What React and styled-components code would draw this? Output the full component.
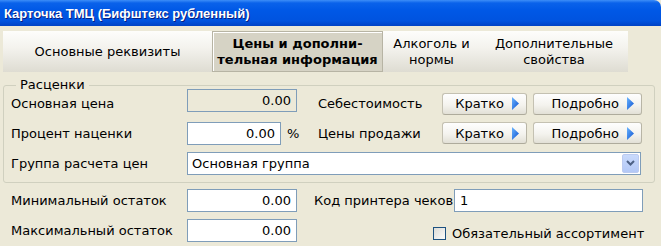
import React from "react";
import styled, { createGlobalStyle } from "styled-components";

const GlobalStyle = createGlobalStyle`
  body {
    margin: 0;
    background: #ffffff;
    font-family: "DejaVu Sans", "Liberation Sans", sans-serif;
  }
`;

const Window = styled.div`
  width: 661px;
  height: 246px;
  background: #ece9d8;
  font-size: 13px;
  color: #000;
  overflow: hidden;
`;

const TitleBar = styled.div`
  height: 26px;
  display: flex;
  align-items: center;
  padding-left: 4px;
  border-top-right-radius: 7px;
  background: linear-gradient(
    #3d8ef8 0,
    #0a62ea 3px,
    #0058e6 40%,
    #0053df 80%,
    #0042c4 100%
  );
  color: #fff;
  font-family: "Liberation Sans", "DejaVu Sans", sans-serif;
  font-weight: bold;
  font-size: 13px;
  text-shadow: 1px 1px 0 #0a1e80;
`;

const Body = styled.div`
  padding: 5px 6px 0 3px;
`;

const TabStrip = styled.div`
  display: flex;
  height: 41px;
`;

const Tab = styled.div`
  width: ${(p) => p.$w}px;
  display: flex;
  align-items: center;
  justify-content: center;
  text-align: center;
  line-height: 16px;
  box-sizing: border-box;
  background: ${(p) =>
    p.$active
      ? "#d6d3c5"
      : "linear-gradient(#fdfdfb 0%, #f4f3ee 40%, #dedcd2 100%)"};
  border: ${(p) => (p.$active ? "1px solid #b7b4a4" : "none")};
  box-shadow: ${(p) => (p.$active ? "inset 1px 1px 0 #fff" : "none")};
  font-weight: ${(p) => (p.$active ? "bold" : "normal")};
`;

const GroupBox = styled.div`
  position: relative;
  margin-top: 13px;
  border: 1px solid #d0d0bf;
  border-radius: 3px;
  padding: 4px 0 7px 7px;
`;

const Legend = styled.span`
  position: absolute;
  top: -9px;
  left: 12px;
  padding: 0 4px;
  background: #ece9d8;
  line-height: 16px;
`;

const Row = styled.div`
  display: flex;
  align-items: center;
  height: ${(p) => p.$h || 24}px;
  margin-top: ${(p) => p.$mt || 0}px;
`;

const Label = styled.div`
  width: ${(p) => p.$w}px;
  padding-left: ${(p) => p.$pl || 0}px;
  box-sizing: border-box;
  white-space: nowrap;
`;

const FieldCell = styled.div`
  width: ${(p) => p.$w}px;
  display: flex;
  align-items: center;
`;

const TextBox = styled.div`
  width: ${(p) => p.$w}px;
  height: 23px;
  box-sizing: border-box;
  border: 1px solid #7f9db9;
  background: ${(p) => (p.$disabled ? "#ece9d8" : "#fff")};
  display: flex;
  align-items: center;
  justify-content: ${(p) => (p.$left ? "flex-start" : "flex-end")};
  padding: 0 5px;
  margin-bottom: ${(p) => p.$up || 0}px;
`;

const Percent = styled.span`
  margin-left: 6px;
`;

const XPButton = styled.div`
  width: ${(p) => p.$w}px;
  height: 22px;
  margin-right: 6px;
  box-sizing: border-box;
  border: 1px solid #c4c1b2;
  border-bottom-color: #aeab9c;
  border-right-color: #b8b5a6;
  border-radius: 3px;
  background: linear-gradient(#fefefe 0%, #f4f3ee 55%, #e2e0d6 100%);
  display: flex;
  align-items: center;
  justify-content: flex-end;
  padding-right: 7px;
  gap: 8px;
`;

const Select = styled.div`
  width: 454px;
  height: 23px;
  box-sizing: border-box;
  border: 1px solid #7f9db9;
  background: #fff;
  display: flex;
  align-items: center;
  justify-content: space-between;
  padding: 0 1px 0 4px;
`;

const DropButton = styled.div`
  width: 17px;
  height: 19px;
  border-radius: 2px;
  background: linear-gradient(#c9dafc, #b3c8f6);
  border: 1px solid #bccbf0;
  box-sizing: border-box;
  display: flex;
  align-items: center;
  justify-content: center;
`;

const Lower = styled.div`
  padding-left: 8px;
  margin-top: 5px;
`;

const CheckWrap = styled.div`
  display: flex;
  align-items: center;
  margin-left: 136px;
  margin-top: 7px;
  gap: 6px;
`;

const CheckBox = styled.div`
  width: 13px;
  height: 13px;
  box-sizing: border-box;
  border: 1px solid #1c5180;
  background: linear-gradient(135deg, #dcdcd7, #fbfbf9);
`;

const Arrow = () => (
  <svg width="7" height="13" viewBox="0 0 7 13">
    <defs>
      <linearGradient id="ag" x1="0" y1="0" x2="1" y2="1">
        <stop offset="0" stopColor="#6cb6ff" />
        <stop offset="1" stopColor="#0a4fd0" />
      </linearGradient>
    </defs>
    <polygon points="0,0 7,6.5 0,13" fill="url(#ag)" />
  </svg>
);

const Chevron = () => (
  <svg width="9" height="6" viewBox="0 0 9 6">
    <polyline points="1,1 4.5,4.5 8,1" fill="none" stroke="#4d6185" strokeWidth="2" />
  </svg>
);

export default function App() {
  return (
    <Window>
      <GlobalStyle />
      <TitleBar>Карточка ТМЦ (Бифштекс рубленный)</TitleBar>
      <Body>
        <TabStrip>
          <Tab $w={209}>Основные реквизиты</Tab>
          <Tab $w={171} $active>
            Цены и дополни-
            <br />
            тельная информация
          </Tab>
          <Tab $w={97}>
            Алкоголь и
            <br />
            нормы
          </Tab>
          <Tab $w={148}>
            Дополнительные
            <br />
            свойства
          </Tab>
        </TabStrip>

        <GroupBox>
          <Legend>Расценки</Legend>
          <Row $h={27}>
            <Label $w={176}>Основная цена</Label>
            <FieldCell $w={131}>
              <TextBox $w={110} $disabled $up={6}>0.00</TextBox>
            </FieldCell>
            <Label $w={124}>Себестоимость</Label>
            <XPButton $w={85}>Кратко <Arrow /></XPButton>
            <XPButton $w={109}>Подробно <Arrow /></XPButton>
          </Row>
          <Row $mt={4}>
            <Label $w={176}>Процент наценки</Label>
            <FieldCell $w={131}>
              <TextBox $w={94}>0.00</TextBox>
              <Percent>%</Percent>
            </FieldCell>
            <Label $w={124}>Цены продажи</Label>
            <XPButton $w={85}>Кратко <Arrow /></XPButton>
            <XPButton $w={109}>Подробно <Arrow /></XPButton>
          </Row>
          <Row $mt={6}>
            <Label $w={176}>Группа расчета цен</Label>
            <Select>
              <span>Основная группа</span>
              <DropButton>
                <Chevron />
              </DropButton>
            </Select>
          </Row>
        </GroupBox>

        <Lower>
          <Row $mt={0}>
            <Label $w={176}>Минимальный остаток</Label>
            <TextBox $w={110}>0.00</TextBox>
            <Label $w={157} $pl={17}>Код принтера чеков</Label>
            <TextBox $w={189} $left>1</TextBox>
          </Row>
          <Row $mt={6}>
            <Label $w={176}>Максимальный остаток</Label>
            <TextBox $w={110}>0.00</TextBox>
            <CheckWrap>
              <CheckBox />
              <span>Обязательный ассортимент</span>
            </CheckWrap>
          </Row>
        </Lower>
      </Body>
    </Window>
  );
}
